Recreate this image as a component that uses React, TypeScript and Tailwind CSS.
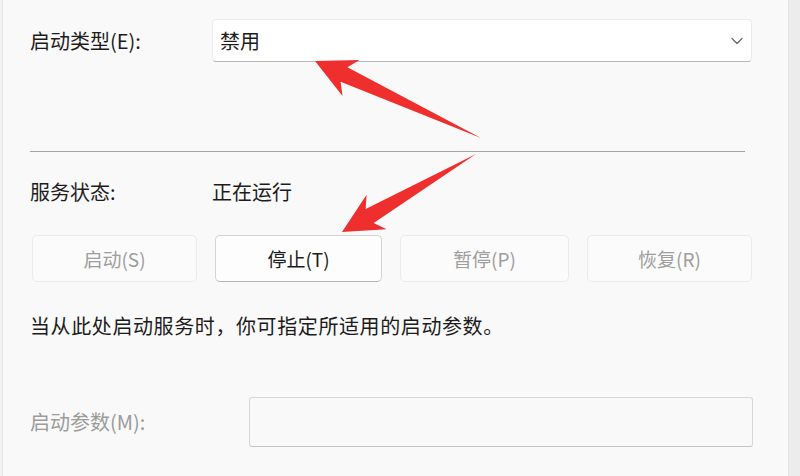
import React from 'react';
import { ChevronDown } from 'lucide-react';

const BUTTONS = [
  { label: '启动(S)', enabled: false },
  { label: '停止(T)', enabled: true },
  { label: '暂停(P)', enabled: false },
  { label: '恢复(R)', enabled: false },
];

const Arrows: React.FC = () => (
  <svg className="absolute inset-0 pointer-events-none" width="800" height="476" viewBox="0 0 800 476">
    <defs>
      <filter id="soft" x="-10%" y="-10%" width="120%" height="120%">
        <feGaussianBlur stdDeviation="0.5" />
      </filter>
    </defs>
    {/* points to the startup type dropdown */}
    <polygon
      filter="url(#soft)"
      fill="#ef2d2d"
      points="315,61 359.5,60 347.4,67.3 481,138 340.6,81.7 342.5,96"
    />
    {/* points to the stop button */}
    <polygon
      filter="url(#soft)"
      fill="#ef2d2d"
      points="342,232 366.6,194.7 365.7,209.1 476,154 373.7,222.9 386.6,229.3"
    />
  </svg>
);

export default function App() {
  return (
    <div className="relative w-[800px] h-[476px] overflow-hidden bg-[#f9f9f9] flex font-['Noto_Sans_CJK_SC','Noto_Sans',sans-serif] text-[20px] leading-[28px] text-[#1c1c1c]">
      <div className="w-[3px] bg-[#f1f1f1] border-r border-[#e8e8e8]" />

      <div className="flex-1 pl-[27px] pt-[19px] flex flex-col">
        {/* startup type */}
        <div className="flex items-center h-[43px]">
          <div className="w-[182px]">启动类型(E):</div>
          <div className="w-[540px] h-[43px] bg-white rounded-[4px] border border-[#ececec] border-b-[#b8b8b8] flex items-center justify-between pl-[7px] pr-[4px]">
            <span>禁用</span>
            <ChevronDown size={20} strokeWidth={1.5} className="text-[#6a6a6a]" />
          </div>
        </div>

        <div className="mt-[89px] w-[715px] h-px bg-[#a3a3a3]" />

        {/* service status */}
        <div className="mt-[26px] flex items-center">
          <div className="w-[182px]">服务状态:</div>
          <div>正在运行</div>
        </div>

        <div className="mt-[29px] ml-[2px] w-[720px] grid grid-cols-[165px_167px_169px_165px] gap-[17px] justify-between">
          {BUTTONS.map((b) => (
            <button
              key={b.label}
              className={
                b.enabled
                  ? 'h-[47px] rounded-[5px] bg-[#fdfdfd] border border-[#d4d4d4] border-b-[#b4b4b4] text-[#1c1c1c] text-[19px]'
                  : 'h-[47px] rounded-[5px] bg-[#fbfbfb] border border-[#ebebeb] text-[#9e9e9e] text-[19px]'
              }
            >
              {b.label}
            </button>
          ))}
        </div>

        <div className="mt-[30px] tracking-[0.6px]">当从此处启动服务时，你可指定所适用的启动参数。</div>

        {/* start parameters */}
        <div className="mt-[57px] flex items-center">
          <div className="w-[219px] text-[#9b9b9b]">启动参数(M):</div>
          <div className="w-[504px] h-[50px] rounded-[3px] bg-[#f9f9f9] border border-[#d6d6d6] border-b-[#c4c4c4]" />
        </div>
      </div>

      <div className="w-[12px] bg-[#ececec] border-l border-[#e2e2e2]" />

      <Arrows />
    </div>
  );
}
